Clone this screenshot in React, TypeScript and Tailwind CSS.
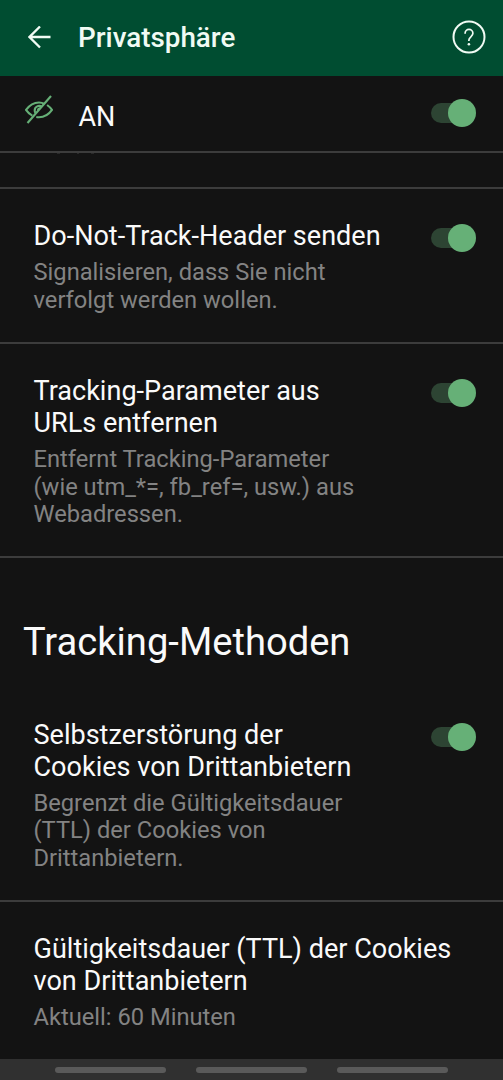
import type { ReactNode } from "react";

function Toggle() {
  return (
    <div role="switch" aria-checked="true" className="flex h-7 w-[45px] shrink-0 items-center justify-end rounded-full">
      <div className="h-5 w-[31px] rounded-l-full bg-[#2d4433]" />
      <div className="-ml-[14px] size-7 rounded-full bg-[#66b077]" />
    </div>
  );
}

function Row({ title, lines, toggle = true, className }: {
  title: string[];
  lines: string[];
  toggle?: boolean;
  className: string;
}) {
  return (
    <section className={`flex items-start justify-between pr-[27px] pl-[33.5px] ${className}`}>
      <div className="whitespace-nowrap">
        <h2 className="text-[27.05px] leading-[31.6px] text-[#fafafa]">
          {title.map((t) => <Line key={t}>{t}</Line>)}
        </h2>
        <p className="mt-[6.8px] text-[23.7px] leading-[27.4px] text-[#838383]">
          {lines.map((t) => <Line key={t}>{t}</Line>)}
        </p>
      </div>
      {toggle && <div className="mt-[2.5px]"><Toggle /></div>}
    </section>
  );
}

function Line({ children }: { children: ReactNode }) {
  return <span className="block">{children}</span>;
}

export default function App() {
  return (
    <div className="flex h-[1080px] w-[503px] flex-col overflow-hidden bg-[#131313] font-['Roboto',sans-serif]">
      <header className="flex h-[76px] shrink-0 items-center bg-[#004d31] pr-[17px] pl-[28px] text-[#f0fbf4]">
        <svg className="size-6 shrink-0" viewBox="0 0 24 24" fill="none" stroke="currentColor" strokeWidth="2.3">
          <path d="M12.5 1.5 2 12l10.500 10.500M2 12h21" transform="translate(-0.500 -1)" />
        </svg>
        <h1 className="ml-[26px] flex-1 text-[27.8px] leading-8 font-medium">Privatsphäre</h1>
        <svg className="-mt-0.5 size-[34px] shrink-0" viewBox="0 0 34 34" fill="none" stroke="currentColor">
          <circle cx="17" cy="17" r="15.500" strokeWidth="2" />
          <path d="M13.100 13.700v-.4a3.900 3.900 0 0 1 7.800 0c0 3.300-4 3.700-4 6.800v.8" strokeWidth="1.7" />
          <circle cx="16.900" cy="24.200" r="1.300" fill="currentColor" stroke="none" />
        </svg>
      </header>

      <div className="flex h-[77px] shrink-0 items-start border-b-2 border-[#3c3c3c] pr-[27px] pl-[24px]">
        <svg className="mt-[19px] h-[30px] w-[30px] shrink-0 text-[#66b077]" viewBox="0 0 30 30" fill="none" stroke="currentColor" strokeWidth="2.100">
          <path d="M20.500 9C18.800 8 16.800 7.500 15 7.500c-5 0-10 3.300-13 7.400 1.700 2.500 3.900 4.500 6.300 5.700M12.300 22c.9.200 1.800.2 2.700.2 5 0 10-3 13-7.300-1.400-2-3-3.600-4.900-4.900" strokeLinejoin="round" />
          <path d="M18 12a4.400 4.400 0 0 0-7.300 3.500c0 .9.300 1.800.7 2.500M14 15.500c0-1.200.8-2 2-2" />
          <path d="M3.500 28 27 1" />
        </svg>
        <span className="mt-[25px] ml-[24.5px] flex-1 text-[27px] leading-8 text-[#fafafa]">AN</span>
        <div className="mt-[23.4px]"><Toggle /></div>
      </div>
      <div className="flex h-[36px] shrink-0 items-start border-b-2 border-[#3c3c3c] pl-[57px]">
        <span className="h-px w-[3px] bg-[#292929]" />
        <span className="ml-[17px] h-px w-[2px] bg-[#292929]" />
        <span className="ml-[12px] h-px w-[3px] bg-[#292929]" />
      </div>

      <Row className="h-[155px] shrink-0 border-b-2 border-[#3c3c3c] pt-[32.1px]" title={["Do-Not-Track-Header senden"]} lines={["Signalisieren, dass Sie nicht", "verfolgt werden wollen."]} />
      <Row className="h-[214px] shrink-0 border-b-2 border-[#3c3c3c] pt-[32.4px]" title={["Tracking-Parameter aus", "URLs entfernen"]} lines={["Entfernt Tracking-Parameter", "(wie utm_*=, fb_ref=, usw.) aus", "Webadressen."]} />

      <h1 className="h-[130px] shrink-0 pt-[62px] pl-[23px] text-[38.150px] leading-[45px] text-[#fafafa]">Tracking-Methoden</h1>

      <Row className="h-[214px] shrink-0 border-b-2 border-[#3c3c3c] pt-[32.1px]" title={["Selbstzerstörung der", "Cookies von Drittanbietern"]} lines={["Begrenzt die Gültigkeitsdauer", "(TTL) der Cookies von", "Drittanbietern."]} />
      <Row className="h-[157px] shrink-0 pt-[32.4px]" toggle={false} title={["Gültigkeitsdauer (TTL) der Cookies", "von Drittanbietern"]} lines={["Aktuell: 60 Minuten"]} />

      <nav className="flex h-[21px] shrink-0 items-center justify-center gap-[30px] bg-[#303030]">
        <span className="h-1.5 w-[111px] rounded-full bg-[#5a5a5a]" />
        <span className="h-1.5 w-[111px] rounded-full bg-[#5a5a5a]" />
        <span className="h-1.5 w-[111px] rounded-full bg-[#5a5a5a]" />
      </nav>
    </div>
  );
}
